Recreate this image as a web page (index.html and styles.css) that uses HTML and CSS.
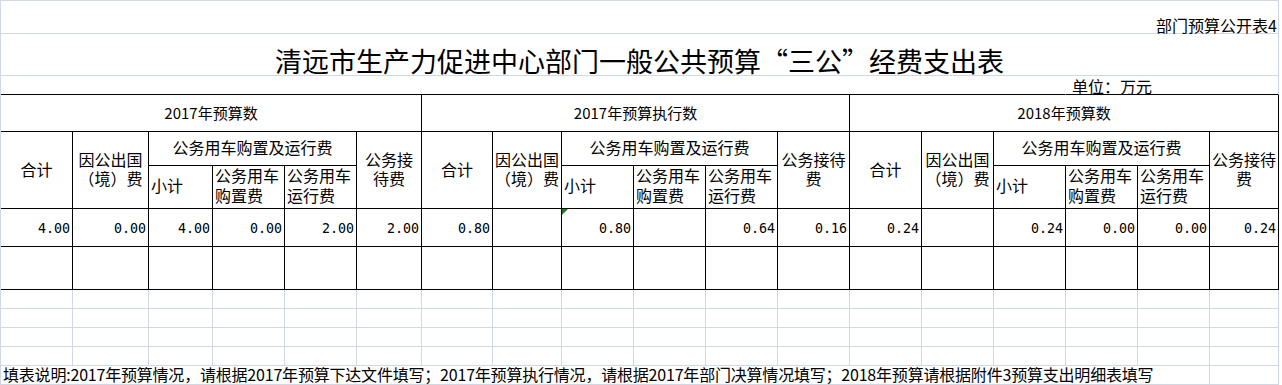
FILE: index.html
```html
<!DOCTYPE html>
<html lang="zh-CN">
<head>
<meta charset="utf-8">
<title>三公经费支出表</title>
<link rel="stylesheet" href="styles.css">
</head>
<body>
<div class="sheet">
  <div class="c full tag"><span>部门预算公开表4</span></div>
  <div class="c full title"><span>清远市生产力促进中心部门一般公共预算“三公”经费支出表</span></div>
  <div class="c unit-pad"></div>
  <div class="c unit"><span>单位：万元</span></div>

  <div class="c t grp"><span>2017年预算数</span></div>
  <div class="c t grp"><span>2017年预算执行数</span></div>
  <div class="c t grp"><span>2018年预算数</span></div>

  <div class="c t h tall"><span>合计</span></div>
  <div class="c t h tall"><span>因公出国</span><span>（境）费</span></div>
  <div class="c t h car"><span>公务用车购置及运行费</span></div>
  <div class="c t h tall"><span>公务接</span><span>待费</span></div>
  <div class="c t h tall"><span>合计</span></div>
  <div class="c t h tall"><span>因公出国</span><span>（境）费</span></div>
  <div class="c t h car"><span>公务用车购置及运行费</span></div>
  <div class="c t h tall"><span>公务接待</span><span>费</span></div>
  <div class="c t h tall"><span>合计</span></div>
  <div class="c t h tall"><span>因公出国</span><span>（境）费</span></div>
  <div class="c t h car"><span>公务用车购置及运行费</span></div>
  <div class="c t h tall"><span>公务接待</span><span>费</span></div>

  <div class="c t hl"><span>小计</span></div>
  <div class="c t hl"><span>公务用车</span><span>购置费</span></div>
  <div class="c t hl"><span>公务用车</span><span>运行费</span></div>
  <div class="c t hl"><span>小计</span></div>
  <div class="c t hl"><span>公务用车</span><span>购置费</span></div>
  <div class="c t hl"><span>公务用车</span><span>运行费</span></div>
  <div class="c t hl"><span>小计</span></div>
  <div class="c t hl"><span>公务用车</span><span>购置费</span></div>
  <div class="c t hl"><span>公务用车</span><span>运行费</span></div>

  <div class="c t n"><span>4.00</span></div>
  <div class="c t n"><span>0.00</span></div>
  <div class="c t n"><span>4.00</span></div>
  <div class="c t n"><span>0.00</span></div>
  <div class="c t n"><span>2.00</span></div>
  <div class="c t n"><span>2.00</span></div>
  <div class="c t n"><span>0.80</span></div>
  <div class="c t n"></div>
  <div class="c t n err"><span>0.80</span></div>
  <div class="c t n"></div>
  <div class="c t n"><span>0.64</span></div>
  <div class="c t n"><span>0.16</span></div>
  <div class="c t n"><span>0.24</span></div>
  <div class="c t n"></div>
  <div class="c t n"><span>0.24</span></div>
  <div class="c t n"><span>0.00</span></div>
  <div class="c t n"><span>0.00</span></div>
  <div class="c t n"><span>0.24</span></div>

  <div class="c t"></div><div class="c t"></div><div class="c t"></div><div class="c t"></div><div class="c t"></div><div class="c t"></div>
  <div class="c t"></div><div class="c t"></div><div class="c t"></div><div class="c t"></div><div class="c t"></div><div class="c t"></div>
  <div class="c t"></div><div class="c t"></div><div class="c t"></div><div class="c t"></div><div class="c t"></div><div class="c t"></div>

  <div class="c"></div><div class="c"></div><div class="c"></div><div class="c"></div><div class="c"></div><div class="c"></div>
  <div class="c"></div><div class="c"></div><div class="c"></div><div class="c"></div><div class="c"></div><div class="c"></div>
  <div class="c"></div><div class="c"></div><div class="c"></div><div class="c"></div><div class="c"></div><div class="c"></div>

  <div class="c"></div><div class="c"></div><div class="c"></div><div class="c"></div><div class="c"></div><div class="c"></div>
  <div class="c"></div><div class="c"></div><div class="c"></div><div class="c"></div><div class="c"></div><div class="c"></div>
  <div class="c"></div><div class="c"></div><div class="c"></div><div class="c"></div><div class="c"></div><div class="c"></div>

  <div class="c"></div><div class="c"></div><div class="c"></div><div class="c"></div><div class="c"></div><div class="c"></div>
  <div class="c"></div><div class="c"></div><div class="c"></div><div class="c"></div><div class="c"></div><div class="c"></div>
  <div class="c"></div><div class="c"></div><div class="c"></div><div class="c"></div><div class="c"></div><div class="c"></div>

  <div class="c"></div><div class="c"></div><div class="c"></div><div class="c"></div><div class="c"></div><div class="c"></div>
  <div class="c"></div><div class="c"></div><div class="c"></div><div class="c"></div><div class="c"></div><div class="c"></div>
  <div class="c"></div><div class="c"></div><div class="c"></div><div class="c"></div><div class="c"></div><div class="c"></div>

  <div class="c note"><span>填表说明:2017年预算情况，请根据2017年预算下达文件填写；2017年预算执行情况，请根据2017年部门决算情况填写；2018年预算请根据附件3预算支出明细表填写</span></div>
  <div class="c"></div>
</div>
</body>
</html>
```

FILE: styles.css
```css
html, body {
  margin: 0;
  padding: 0;
  background: #ffffff;
}

body {
  width: 1282px;
  height: 385px;
  overflow: hidden;
  font-family: "Noto Sans CJK SC", "Noto Sans", sans-serif;
  color: #000000;
}

.sheet {
  display: grid;
  grid-template-columns: 72px 76px 64px 72px 72px 65px 71px 69px 72px 72px 72px 72px 72px 72px 72px 72px 72px 69px;
  grid-template-rows: 33px 42px 19px 37px 34px 43px 38px 43px 19px 19px 19px 19px 19px;
  width: max-content;
  border-left: 1px solid #d0d7e5;
  border-top: 1px solid #d0d7e5;
}

.c {
  box-sizing: border-box;
  border-right: 1px solid #d0d7e5;
  border-bottom: 1px solid #d0d7e5;
  display: flex;
  align-items: flex-end;
  font-size: 16px;
  line-height: 16px;
  white-space: nowrap;
  min-width: 0;
}

.t {
  border-right-color: #000000;
  border-bottom-color: #000000;
}

.full {
  grid-column: 1 / -1;
}

.tag {
  justify-content: flex-end;
  padding-right: 1px;
}

.title {
  justify-content: center;
  font-size: 27px;
  line-height: 27px;
  padding-bottom: 1px;
}

.unit-pad {
  grid-column: 1 / 16;
  border-right-color: transparent;
  border-bottom-color: #000000;
}

.unit {
  grid-column: 16 / -1;
  padding-left: 6px;
  border-bottom-color: #000000;
}

.grp {
  grid-column: span 6;
  justify-content: center;
  align-items: center;
  font-size: 15px;
}

.h,
.hl {
  flex-direction: column;
  justify-content: center;
  font-family: "Liberation Sans", "Noto Sans CJK SC", sans-serif;
  line-height: 19px;
}

.h {
  align-items: center;
  text-align: center;
}

.hl {
  align-items: flex-start;
  text-align: left;
  padding-left: 2px;
  line-height: 20px;
}

.h span,
.hl span {
  display: block;
}

.tall {
  grid-row: span 2;
}

.car {
  grid-column: span 3;
}

.n {
  justify-content: flex-end;
  align-items: center;
  padding-right: 2px;
  padding-top: 2px;
  font-family: "DejaVu Sans Mono", "Liberation Mono", monospace;
  font-size: 13.33px;
}

.err {
  position: relative;
}

.err::before {
  content: "";
  position: absolute;
  left: 0;
  top: 0;
  border-top: 6px solid #1e7e1e;
  border-right: 6px solid transparent;
}

.note {
  grid-column: span 17;
  padding-left: 2px;
  padding-bottom: 2px;
  letter-spacing: -0.2px;
}
```
